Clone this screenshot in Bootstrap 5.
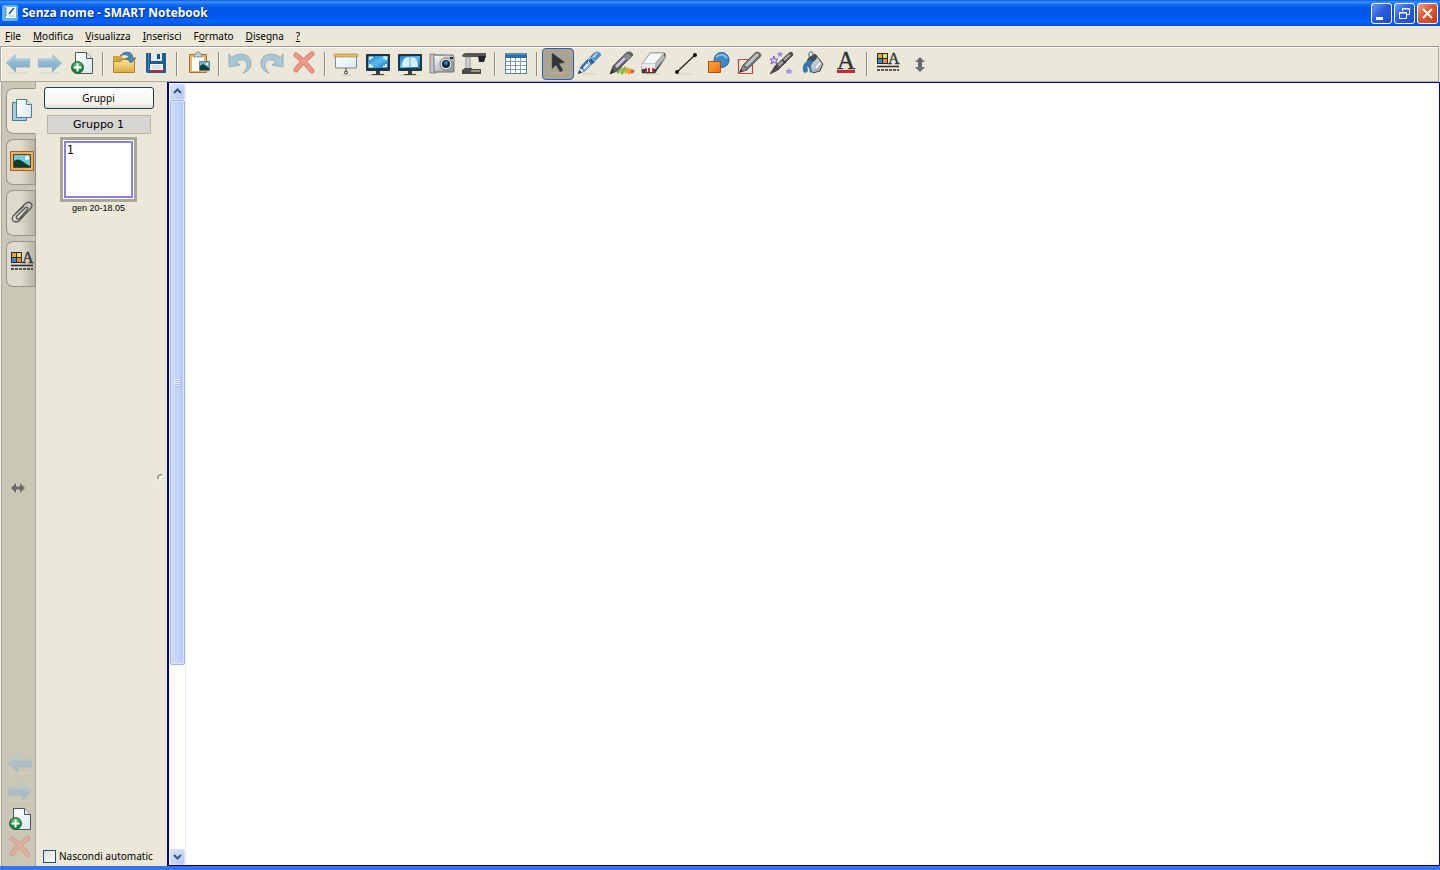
<!DOCTYPE html>
<html lang="it">
<head>
<meta charset="utf-8">
<meta name="viewport" content="width=device-width, initial-scale=1">
<title>Senza nome - SMART Notebook</title>
<link href="https://cdn.jsdelivr.net/npm/bootstrap@5.3.0/dist/css/bootstrap.min.css" rel="stylesheet">
<style>
  :root { --face: #ebe8d9; --rail: #cac7b7; --navy: #00008c; }
  body { background: var(--face); color: #000; font: 10px/14px "Noto Sans", "Liberation Sans", sans-serif; }
  button { color: inherit; font: inherit; }
  svg { display: block; }
  .titlebar { height: 26px; padding: 0 2px; background: linear-gradient(#0a5be0 0, #3a93ff 2px, #0a66f2 5px, #0055e5 9px, #0058ee 16px, #0066ff 22px, #0047c9 26px); }
  .titlebar h1 { font: bold 12px/16px "Open Sans", "Noto Sans", sans-serif; color: #fff; text-shadow: 1px 1px 1px #0b2a80; }
  .caption-btn { width: 21px; height: 21px; border: 1px solid #fff; border-radius: 3px; background: linear-gradient(135deg, #6f9cf5, #2c5ee0 45%, #1c4bc8); }
  .caption-btn.close-btn { background: linear-gradient(135deg, #f0a088, #de5632 45%, #c63c14); }
  .menubar { height: 20px; padding-left: 5px; gap: 12px; }
  .menubar button, .tool, .rail-btn, .rail-tab { border: 0; background: none; padding: 0; }
  .toolbar-strip { height: 36px; margin-right: 1px; padding-left: 1px; border: 1px solid #aca899; border-top-color: #9c9a8c; box-shadow: inset 1px 1px #fff; }
  .tool { width: 32px; height: 32px; border-radius: 4px; }
  .tool.active { border: 1px solid #2d5fb4; background: #aaa593; }
  .tool.active svg { margin: -1px; }
  .divider { width: 2px; height: 24px; margin: 0 4px; border-left: 1px solid #8f8d80; border-right: 1px solid #f8f6ea; }
  .rail { width: 36px; background: var(--rail); border-left: 1px solid #f4f2e6; border-right: 1px solid #aaa796; padding: 6px 0 4px; box-shadow: inset 1px 0 #aaa796; }
  .rail-tab { width: 30px; height: 46px; margin: 0 -1px 5px 5px; border: 1px solid #98958a; border-right-color: #8e8b7f; border-radius: 7px 0 0 7px; background: linear-gradient(90deg, #dedbcc 50%, #b7b4a5); }
  .rail-tab.active { background: var(--face); border-right-color: var(--face); }
  .rail-tab svg { margin-top: -2px; }
  .rail-btn { width: 32px; height: 28px; margin-left: 3px; }
  .rail-grip { height: 14px; margin-left: 2px; }
  .grow-up { flex: 3; } .grow-down { flex: 4; }
  .sorter { width: 131px; padding: 5px 13px 3px 7px; }
  .group-menu { height: 22px; width: 110px; border: 1px solid #1c3f5c; border-radius: 3px; background: linear-gradient(#fff, #f5f4ee 80%, #dcd8cc); }
  .group-name { width: 104px; height: 19px; margin-top: 6px; border: 1px solid #b5b3ac; background: #d6d5d2; font: 11px/18px "DejaVu Sans", sans-serif; }
  .thumb { width: 77px; height: 65px; margin-top: 3px; padding: 1px; border: 3px solid #aaa69c; background: #fff; }
  .thumb-page { height: 100%; border: 2px solid #8880e6; font: 12px/14px "DejaVu Sans Condensed", sans-serif; padding: 0 1px; }
  .thumb-date { font: 9px/12px "Liberation Sans", sans-serif; }
  .grip { right: 3px; top: 50%; }
  .hide-box { width: 13px; height: 13px; margin: 0; appearance: none; border: 1px solid #1c5180; background: linear-gradient(135deg, #dcdcd7, #fff); }
  .canvas-frame { border: 1px solid #0000a0; border-left: 2px solid var(--navy); background: #fff; min-width: 0; }
  .scroller { width: 17px; padding: 1px 0 0 1px; background: #fdfdf9; border-right: 1px solid #f0eee4; }
  .scroll-btn { height: 16px; padding: 0; border: 1px solid #d6e0fb; border-radius: 2px; background: linear-gradient(135deg, #d8e4fe, #b4c8f6); }
  .thumb-bar { flex: 565; border: 1px solid #9cb4e6; border-radius: 2px; background: linear-gradient(90deg, #cfdcfe, #c1d2fd 60%, #b3c6f5); box-shadow: inset 0 0 0 1px #dde7ff; }
  .track { flex: 184; }
  .taskbar-edge { height: 4px; background: #3a73e6; }
</style>
</head>
<body>
<svg width="0" height="0" class="position-absolute" aria-hidden="true">
  <defs>
    <linearGradient id="gBlue" x2="0" y2="1"><stop stop-color="#a9cbe0"/><stop offset="1" stop-color="#7ba6c4"/></linearGradient>
    <linearGradient id="gScreen" x2="1" y2="1"><stop stop-color="#1b7fc4"/><stop offset=".5" stop-color="#5bbcee"/><stop offset="1" stop-color="#1272b8"/></linearGradient>
    <linearGradient id="gFold" x2="0" y2="1"><stop stop-color="#fbe5a0"/><stop offset="1" stop-color="#dba940"/></linearGradient>
    <linearGradient id="gOrange" x2="1" y2="1"><stop stop-color="#ffa640"/><stop offset="1" stop-color="#ee6c10"/></linearGradient>
    <linearGradient id="gGrey" x2="1" y2="1"><stop stop-color="#fff"/><stop offset="1" stop-color="#8b8f94"/></linearGradient>
    <linearGradient id="gPage" x2="1" y2="1"><stop stop-color="#fff"/><stop offset="1" stop-color="#d9e9f0"/></linearGradient>
    <radialGradient id="gGreen" cy=".3"><stop stop-color="#7ed08a"/><stop offset="1" stop-color="#1c7c38"/></radialGradient>
    <symbol id="arrow-left" viewBox="0 0 32 32"><path d="M6 25h20" stroke="#dcd9ca" stroke-width="1.500"/><path d="M4 15 14 5.500v5h14v9H14v5z" fill="url(#gBlue)"/><path d="M6 15l7-6v3h14" fill="none" stroke="#b9d5e4"/></symbol>
    <symbol id="arrow-right" viewBox="0 0 32 32"><path d="M6 25h20" stroke="#dcd9ca" stroke-width="1.500"/><path d="M28 15 18 5.500v5H4v9h14v5z" fill="url(#gBlue)"/><path d="M5 12h14V9l7 6" fill="none" stroke="#b9d5e4"/></symbol>
    <symbol id="page-add" viewBox="0 0 32 32"><path d="M9.500 4.500h11l6 6v15h-17z" fill="url(#gPage)" stroke="#4e5659"/><path d="M20.500 4.500v6h6" fill="#dde7ea" stroke="#4e5659"/><circle cx="11.500" cy="19.500" r="6" fill="url(#gGreen)" stroke="#1e7138"/><path d="M11.500 15.500v8M7.500 19.500h8" stroke="#fff" stroke-width="2"/></symbol>
    <symbol id="folder" viewBox="0 0 32 32"><path d="M5 8h8l2 2h11v14H5z" fill="#d8a23c"/><path d="M5.500 24.500V13.500h7l2-2h12v13z" fill="url(#gFold)" stroke="#b47c24"/><path d="M12 8c4-6 13-5 13 2h3l-5 5-5-5h3c-1-4-5-4-9-2z" fill="#4d87b2" stroke="#315f84" stroke-width=".6"/></symbol>
    <symbol id="floppy" viewBox="0 0 32 32"><path d="M6 5h20v20H7l-1-1z" fill="#215c91"/><path d="M8 5h1v18H8z" fill="#4888bb"/><path d="M11 5h11v8H11z" fill="#dfe9ef"/><path d="M17 6h3v5h-3z" fill="#1c4d7c"/><path d="M10 16h13v8H10z" fill="#fff"/><path d="M10 22h13v2H10z" fill="#c02532"/><path d="M12 18h9M12 20h9" stroke="#b9c5cc"/></symbol>
    <symbol id="paste" viewBox="0 0 32 32"><path d="M7.500 6.500h17v18h-17z" fill="#e9b468" stroke="#a87028"/><path d="M10 9h12v14H10z" fill="#fff"/><path d="M12 9V6h2c0-3 4-3 4 0h2v3z" fill="#c9cdca" stroke="#72766f" stroke-width=".7"/><path d="M17.500 13.500h10v9h-10z" fill="#68b8d0" stroke="#6e7d80"/><path d="M18 18l3-2 6 4v2h-9z" fill="#0b4037"/><path d="M24 15h2v2h-2z" fill="#fff"/></symbol>
    <symbol id="undo" viewBox="0 0 32 32"><path d="M5 6l2 4c8-7 20-4 20 5 0 6-4 9-8 10 4-4 5-8 3-11-2-3-7-3-10 0l4 3-11 2z" fill="#a9c6d3" stroke="#7fa5b8" stroke-width=".8"/></symbol>
    <symbol id="redo" viewBox="0 0 32 32"><path d="M27 6l-2 4C17 3 5 6 5 15c0 6 4 9 8 10-4-4-5-8-3-11 2-3 7-3 10 0l-4 3 11 2z" fill="#b0c8d0" stroke="#7fa5b8" stroke-width=".8"/></symbol>
    <symbol id="delete" viewBox="0 0 32 32"><path d="M8 7c4 3 12 11 16 16M24 6C19 10 12 16 8 22" fill="none" stroke="#dc7e70" stroke-width="5" stroke-linecap="round"/><path d="M8 7c4 3 12 11 16 16M24 6C19 10 12 16 8 22" fill="none" stroke="#ee9a8b" stroke-width="3" stroke-linecap="round"/></symbol>
    <symbol id="shade" viewBox="0 0 32 32"><path d="M5.500 8h21v12h-21z" fill="url(#gPage)" stroke="#7e8992"/><rect x="4" y="6" width="24" height="3" rx="1" fill="#e4bd68" stroke="#a27f36" stroke-width=".6"/><path d="M16 20v3" stroke="#444"/><circle cx="16" cy="24.500" r="1.500" fill="none" stroke="#333"/><path d="M12 27h9" stroke="#cfbda4"/></symbol>
    <symbol id="monitor" viewBox="0 0 32 32"><rect x="4" y="6" width="24" height="17" rx="1" fill="#1d3546"/><path d="M6 8h20v12H6z" fill="url(#gScreen)"/><path d="M14 23h4v3h4v1H10v-1h4z" fill="#3b4247"/><path d="M5 27.500h22" stroke="#e2c8aa"/></symbol>
    <symbol id="fullscreen" viewBox="0 0 32 32"><use href="#monitor"/><path d="M8 12V9.500h3M24 12V9.500h-3M8 16v2.500h3M24 16v2.500h-3" fill="none" stroke="#fff" stroke-width="1.500"/></symbol>
    <symbol id="dual" viewBox="0 0 32 32"><use href="#monitor"/><path d="M8 19c0-7 2-10 7.500-10v10zM16.500 9C22 9 24 12 24 19h-7.500z" fill="#d8eefa"/></symbol>
    <symbol id="camera" viewBox="0 0 32 32"><path d="M4 6h5l1 1v18H4z" fill="#c3c7c9" stroke="#6d7275" stroke-width=".8"/><path d="M8 7h19l1 2v15H8z" fill="url(#gGrey)" stroke="#6d7275"/><path d="M10 6h8v2h-8z" fill="#999ea1"/><circle cx="20" cy="16" r="6" fill="#dfe4e6" stroke="#777"/><circle cx="20" cy="16" r="4" fill="#12253a"/><circle cx="20" cy="15" r="2" fill="#4276bc"/><path d="M24 9h3v2h-3z" fill="#222"/></symbol>
    <symbol id="doc-cam" viewBox="0 0 32 32"><path d="M4 7l3-2h21v4H5z" fill="#55565a"/><path d="M20 8h8l-2 6h-5z" fill="#222328"/><path d="M8 9h4v13H8z" fill="#d1d3d4" stroke="#77797b" stroke-width=".7"/><path d="M4 22l3-2h7v1h9v5H4z" fill="#4c4b49"/><path d="M13 22h9v2h-9z" fill="#96938b"/></symbol>
    <symbol id="table-grid" viewBox="0 0 32 32"><path d="M5.500 5.500h21v20h-21z" fill="#fff" stroke="#597e9c"/><path d="M5 5h22v5H5z" fill="#2c6ea6"/><path d="M5 6h22" stroke="#6faad4"/><path d="M10.500 10v15M15.500 10v15M20.500 10v15M6 13.500h20M6 17.500h20M6 21.500h20" stroke="#829cb1"/></symbol>
    <symbol id="pointer" viewBox="0 0 32 32"><path d="M9 25h14" stroke="#c8ab82" stroke-width="2"/><path d="M10 5v16l4-4 4 7 3-1.500-4-7 6-1z" fill="#30343a" stroke="#57595c" stroke-width=".5"/></symbol>
    <symbol id="pen" viewBox="0 0 32 32"><path d="M8 26h13" stroke="#d6c9ae"/><path d="M4.500 25.500 7 18 20 5q5-3 7 2L11 23z" fill="#f4f7fa" stroke="#5b7690" stroke-width=".7"/><path d="M16 9l4-4q5-3 7 2l-6 6z" fill="#4f8fc9"/><path d="M18 9l4-4h2l-4 5z" fill="#b5d7f1"/><path d="M14 12l3-2 4 4-4 3z" fill="#2a62a4"/><path d="M12 13l2-2v4l2 2-6 6-4-3z" fill="#2d6cb2"/><path d="M13 15l2 2-5 5-1-2z" fill="#e9f2f9"/><path d="M4 26l1.500-4 2.500 2.500z" fill="#234158"/></symbol>
    <symbol id="creative" viewBox="0 0 32 32"><path d="M12 24l3-4M16 25l3-5" stroke="#82b840" stroke-width="3" stroke-linecap="round"/><path d="M20 24l2-3M23 25l2-3" stroke="#e8a02a" stroke-width="3" stroke-linecap="round"/><path d="M26 24l1-1" stroke="#d8564a" stroke-width="3" stroke-linecap="round"/><path d="M4 26l3-8L20 5q5-3 7 2L11 23z" fill="#5d5e66" stroke="#3a3d42" stroke-width=".7"/><path d="M9 18 21 6l3 1-13 13z" fill="#cfc5dc"/><path d="M17 9l4-4 5 4-4 4z" fill="#888a90"/><path d="M4 26l2-5 3 3z" fill="#2c3a2d"/></symbol>
    <symbol id="eraser" viewBox="0 0 32 32"><path d="M8 26h14" stroke="#d6c9ae"/><path d="M4 17 12 5h14q2 0 1 5L17 25H4z" fill="#34363a" stroke="#444" stroke-width=".6"/><path d="M4 16 12 5h14l-9 11z" fill="#f5f6f6" stroke="#888" stroke-width=".7"/><path d="M17 16 26 5l1 5-10 12z" fill="#b4b7b9"/><path d="M4 16h13v5H4z" fill="#e9eaea"/><path d="M7 20h9v4H7z" fill="#fff"/><path d="M7 20h2v4H7zM10 20h2v4h-2zM14 20h2v4h-2z" fill="#d02735"/></symbol>
    <symbol id="line" viewBox="0 0 32 32"><path d="M8 26h16" stroke="#d9cfbb"/><path d="M7 24 25 7" stroke="#222" stroke-width="1.300"/><circle cx="7" cy="24" r="2" fill="#111"/><circle cx="25" cy="7" r="2" fill="#111"/></symbol>
    <symbol id="shapes" viewBox="0 0 32 32"><circle cx="19.500" cy="12" r="7.500" fill="#3c89cd" stroke="#236397"/><path d="M14 9q6-5 11 1" fill="none" stroke="#8ebfe9" stroke-width="2"/><path d="M6.500 13.500h12v11h-12z" fill="url(#gOrange)" stroke="#a65319"/></symbol>
    <symbol id="shape-pen" viewBox="0 0 32 32"><path d="M4.500 11.500h14v14h-14z" fill="none" stroke="#c9443c" stroke-width="1.200"/><path d="M6 24l3-7L22 4q5 0 5 4L13 22z" fill="#6f7074" stroke="#45464a" stroke-width=".7"/><path d="M11 17 23 5l2 2-12 12z" fill="#c5c6c9"/><path d="M6 24l3-7 4 5z" fill="#8d8e8e" stroke="#555" stroke-width=".6"/><path d="M5 25l2-4 2 2z" fill="#333"/></symbol>
    <symbol id="magic" viewBox="0 0 32 32"><path d="M8 8l1 3h3l-2 2 1 3-3-2-3 2 1-3-2-2h3z" fill="#d4c6f4" stroke="#7b59ce"/><path d="M14 3l1 2h2l-1 2v2l-2-1-2 1V7l-1-2h2zM23 19l1 3h3l-2 2 1 2-3-1-3 1 1-2-2-2h3z" fill="#a591df"/><path d="M4 26l5-8L23 5q4-2 4 2L12 22z" fill="#4b4a50" stroke="#29282d" stroke-width=".6"/><path d="M12 16 23 6l2 1-12 12z" fill="#a3a2a9"/><path d="M16 12l4 3" stroke="#2a292d" stroke-width="1.500"/></symbol>
    <symbol id="fill" viewBox="0 0 32 32"><path d="M10 11 17 6l8 10-3 7-7 2-5-7z" fill="url(#gGrey)" stroke="#45494c"/><ellipse cx="14" cy="11" rx="6" ry="3" transform="rotate(-35 14 11)" fill="#384b58"/><path d="M11 9V6c0-3 4-3 4 0v6" fill="none" stroke="#555"/><path d="M8 14c-4 2-4 10-1 11 4-1 3-4 2-6h2l1 6 2-1-1-6 2-4-3-3z" fill="#3977a8"/><path d="M18 20l4-5" stroke="#fff" stroke-width="2"/></symbol>
    <symbol id="text-tool" viewBox="0 0 32 32"><text x="16" y="21" text-anchor="middle" font-family="Liberation Serif, serif" font-size="25" fill="#2f3235" stroke="#2f3235" stroke-width=".4">A</text><path d="M7 23.500h18" stroke="#c62839" stroke-width="3"/></symbol>
    <symbol id="props" viewBox="0 0 32 32"><path d="M5 5h11v11H5z" fill="#1e2d3d"/><path d="M6 6h4v4H6z" fill="#e7a62d"/><path d="M11 6h4v4h-4z" fill="#f4d94a"/><path d="M6 11h4v4H6z" fill="#4583ca"/><path d="M11 11h4v4h-4z" fill="#ea8c2b"/><text x="16" y="16" font-family="Liberation Serif, serif" font-size="16" fill="#303336" stroke="#303336" stroke-width=".4">A</text><path d="M5 18.500h22" stroke="#292c30" stroke-width="1.500"/><path d="M5 22h22" stroke="#292c30" stroke-width="1.500" stroke-dasharray="3 1"/></symbol>
    <symbol id="updown" viewBox="0 0 32 32"><path d="M16 9l5 5h-3v5h3l-5 5-5-5h3v-5h-3z" fill="#6a6b6d"/></symbol>
    <symbol id="pages" viewBox="0 0 28 32"><path d="M5.500 8.500h14v18h-14z" fill="#a9cbdc" stroke="#4e7b91"/><path d="M9.500 5.500h10l5 5v13h-15z" fill="url(#gPage)" stroke="#4e7b91"/><path d="M19.500 5.500v5h5" fill="#d9e5eb" stroke="#4e7b91"/></symbol>
    <symbol id="picture" viewBox="0 0 28 32"><path d="M3.500 6.500h23v19h-23z" fill="#e39d49" stroke="#9c612a"/><path d="M5 8h20v16H5z" fill="none" stroke="#f5c77f"/><path d="M6.500 9.500h17v13h-17z" fill="#74c9d7" stroke="#67401e"/><path d="M7 16q4-3 8 0t8 5v1H7z" fill="#093d31"/><circle cx="20" cy="13" r="2" fill="#fff"/></symbol>
    <symbol id="clip" viewBox="0 0 28 32"><path d="M12 26h13" stroke="#c9c0a8"/><path d="M8 18l10-10c4-4 9 0 6 4L13 24c-4 4-10 1-7-4L17 10M9 21l9-9c2-2 4 0 2 2l-7 8c-2 2-5 1-3-2" fill="none" stroke="#55585a" stroke-width="1.300"/></symbol>
    <symbol id="rail-props" viewBox="1 0 28 32"><use href="#props" width="32" height="32"/></symbol>
  </defs>
</svg>

<div class="d-flex flex-column vh-100 overflow-hidden">
  <header class="titlebar d-flex align-items-center flex-shrink-0">
    <svg width="16" height="16" viewBox="0 0 16 16"><rect width="16" height="16" rx="2" fill="#66b5e6"/><path d="M4 2h10v11H4z" fill="#f5fafc"/><path d="M3 4h2M3 7h2M3 10h2" stroke="#3b7ca9"/><path d="M7 9l5-6" stroke="#315d89" stroke-width="1.500"/><path d="M7 11h5" stroke="#9cb8c7"/></svg>
    <h1 class="mb-0 ms-1 flex-grow-1 text-nowrap">Senza nome - SMART Notebook</h1>
    <div class="d-flex" style="gap:2px">
      <button class="caption-btn p-0" aria-label="Riduci a icona"><svg width="19" height="19"><path d="M4 13h7v3H4z" fill="#fff"/></svg></button>
      <button class="caption-btn p-0" aria-label="Ripristina"><svg width="19" height="19" fill="none" stroke="#fff"><path d="M7.500 7V4.500h7v6H12M7 5h8M4.500 8.500h7v6h-7zM4 9h8" /></svg></button>
      <button class="caption-btn close-btn p-0" aria-label="Chiudi"><svg width="19" height="19"><path d="M5 5l9 9M14 5l-9 9" stroke="#fff" stroke-width="2"/></svg></button>
    </div>
  </header>

  <nav class="menubar d-flex align-items-center flex-shrink-0" aria-label="Menu">
    <button><u>F</u>ile</button><button><u>M</u>odifica</button><button><u>V</u>isualizza</button><button><u>I</u>nserisci</button><button>F<u>o</u>rmato</button><button><u>D</u>isegna</button><button><u>?</u></button>
  </nav>

  <div class="toolbar-strip d-flex align-items-center flex-shrink-0" role="toolbar" aria-label="Strumenti">
    <button class="tool" aria-label="Pagina precedente"><svg width="32" height="32"><use href="#arrow-left"/></svg></button>
    <button class="tool" aria-label="Pagina successiva"><svg width="32" height="32"><use href="#arrow-right"/></svg></button>
    <button class="tool" aria-label="Aggiungi pagina"><svg width="32" height="32"><use href="#page-add"/></svg></button>
    <span class="divider"></span>
    <button class="tool" aria-label="Apri"><svg width="32" height="32"><use href="#folder"/></svg></button>
    <button class="tool" aria-label="Salva"><svg width="32" height="32"><use href="#floppy"/></svg></button>
    <span class="divider"></span>
    <button class="tool" aria-label="Incolla"><svg width="32" height="32"><use href="#paste"/></svg></button>
    <span class="divider"></span>
    <button class="tool" aria-label="Annulla"><svg width="32" height="32"><use href="#undo"/></svg></button>
    <button class="tool" aria-label="Ripeti"><svg width="32" height="32"><use href="#redo"/></svg></button>
    <button class="tool" aria-label="Elimina"><svg width="32" height="32"><use href="#delete"/></svg></button>
    <span class="divider"></span>
    <button class="tool" aria-label="Tendina"><svg width="32" height="32"><use href="#shade"/></svg></button>
    <button class="tool" aria-label="Schermo intero"><svg width="32" height="32"><use href="#fullscreen"/></svg></button>
    <button class="tool" aria-label="Due pagine"><svg width="32" height="32"><use href="#dual"/></svg></button>
    <button class="tool" aria-label="Cattura"><svg width="32" height="32"><use href="#camera"/></svg></button>
    <button class="tool" aria-label="Document camera"><svg width="32" height="32"><use href="#doc-cam"/></svg></button>
    <span class="divider"></span>
    <button class="tool" aria-label="Tabella"><svg width="32" height="32"><use href="#table-grid"/></svg></button>
    <span class="divider"></span>
    <button class="tool active" aria-label="Seleziona" aria-pressed="true"><svg width="32" height="32"><use href="#pointer"/></svg></button>
    <button class="tool" aria-label="Penna"><svg width="32" height="32"><use href="#pen"/></svg></button>
    <button class="tool" aria-label="Penna creativa"><svg width="32" height="32"><use href="#creative"/></svg></button>
    <button class="tool" aria-label="Cancellino"><svg width="32" height="32"><use href="#eraser"/></svg></button>
    <button class="tool" aria-label="Linea"><svg width="32" height="32"><use href="#line"/></svg></button>
    <button class="tool" aria-label="Forme"><svg width="32" height="32"><use href="#shapes"/></svg></button>
    <button class="tool" aria-label="Penna per forme"><svg width="32" height="32"><use href="#shape-pen"/></svg></button>
    <button class="tool" aria-label="Penna magica"><svg width="32" height="32"><use href="#magic"/></svg></button>
    <button class="tool" aria-label="Riempimento"><svg width="32" height="32"><use href="#fill"/></svg></button>
    <button class="tool" aria-label="Testo"><svg width="32" height="32"><use href="#text-tool"/></svg></button>
    <span class="divider"></span>
    <button class="tool" aria-label="Proprietà"><svg width="32" height="32"><use href="#props"/></svg></button>
    <button class="tool" aria-label="Sposta barra"><svg width="32" height="32"><use href="#updown"/></svg></button>
  </div>

  <div class="d-flex flex-grow-1" style="min-height:0">
    <nav class="rail d-flex flex-column flex-shrink-0" aria-label="Schede">
      <button class="rail-tab active" aria-label="Ordinamento pagine"><svg width="28" height="32"><use href="#pages"/></svg></button>
      <button class="rail-tab" aria-label="Raccolta"><svg width="28" height="32"><use href="#picture"/></svg></button>
      <button class="rail-tab" aria-label="Allegati"><svg width="28" height="32"><use href="#clip"/></svg></button>
      <button class="rail-tab" aria-label="Proprietà"><svg width="28" height="32"><use href="#rail-props"/></svg></button>
      <div class="grow-up"></div>
      <button class="rail-btn rail-grip" aria-label="Sposta schede"><svg width="32" height="14"><path d="M8 6l5-5v3.500h4V1l5 5-5 5V7.500h-4V11z" fill="#6a6a6a"/></svg></button>
      <div class="grow-down"></div>
      <button class="rail-btn opacity-50" aria-label="Precedente"><svg width="32" height="28" viewBox="0 2 32 28"><use href="#arrow-left" width="32" height="32"/></svg></button>
      <button class="rail-btn opacity-50" aria-label="Successiva"><svg width="32" height="28" viewBox="0 2 32 28"><use href="#arrow-right" width="32" height="32"/></svg></button>
      <button class="rail-btn" aria-label="Nuova pagina"><svg width="32" height="28" viewBox="0 2 32 28"><use href="#page-add" width="32" height="32"/></svg></button>
      <button class="rail-btn opacity-50" aria-label="Elimina pagina"><svg width="32" height="28" viewBox="0 2 32 28"><use href="#delete" width="32" height="32"/></svg></button>
    </nav>

    <aside class="sorter position-relative d-flex flex-column align-items-center flex-shrink-0">
      <button class="group-menu p-0">Gruppi</button>
      <div class="group-name text-center">Gruppo 1</div>
      <div class="thumb"><div class="thumb-page">1</div></div>
      <div class="thumb-date">gen 20-18.05</div>
      <svg class="grip position-absolute" width="8" height="8"><path d="M2 5V3q0-2 4-2.500" fill="none" stroke="#908e86" stroke-width="1.500"/><path d="M4 7V4l3-2" fill="none" stroke="#fff" stroke-width="1.500"/></svg>
      <label class="d-flex align-items-center align-self-start text-nowrap mt-auto" style="gap:3px"><input type="checkbox" class="hide-box">Nascondi automatic</label>
    </aside>

    <main class="canvas-frame d-flex flex-grow-1">
      <div class="scroller d-flex flex-column">
        <button class="scroll-btn d-flex justify-content-center" aria-label="Scorri su"><svg width="13" height="14"><path d="M3 8l3.500-3.500L10 8" fill="none" stroke="#3d5482" stroke-width="2"/></svg></button>
        <div class="thumb-bar d-flex align-items-center justify-content-center"><svg width="7" height="8"><path d="M0 .5h6M0 2.500h6M0 4.500h6M0 6.500h6" stroke="#eef4fe"/><path d="M1 1.500h6M1 3.500h6M1 5.500h6M1 7.500h6" stroke="#a3bff8"/></svg></div>
        <div class="track"></div>
        <button class="scroll-btn d-flex justify-content-center" aria-label="Scorri giù"><svg width="13" height="14"><path d="M3 5l3.500 3.500L10 5" fill="none" stroke="#3d5482" stroke-width="2"/></svg></button>
      </div>
    </main>
  </div>
  <footer class="taskbar-edge flex-shrink-0"></footer>
</div>
<script src="https://cdn.jsdelivr.net/npm/bootstrap@5.3.0/dist/js/bootstrap.bundle.min.js"></script>
</body>
</html>
